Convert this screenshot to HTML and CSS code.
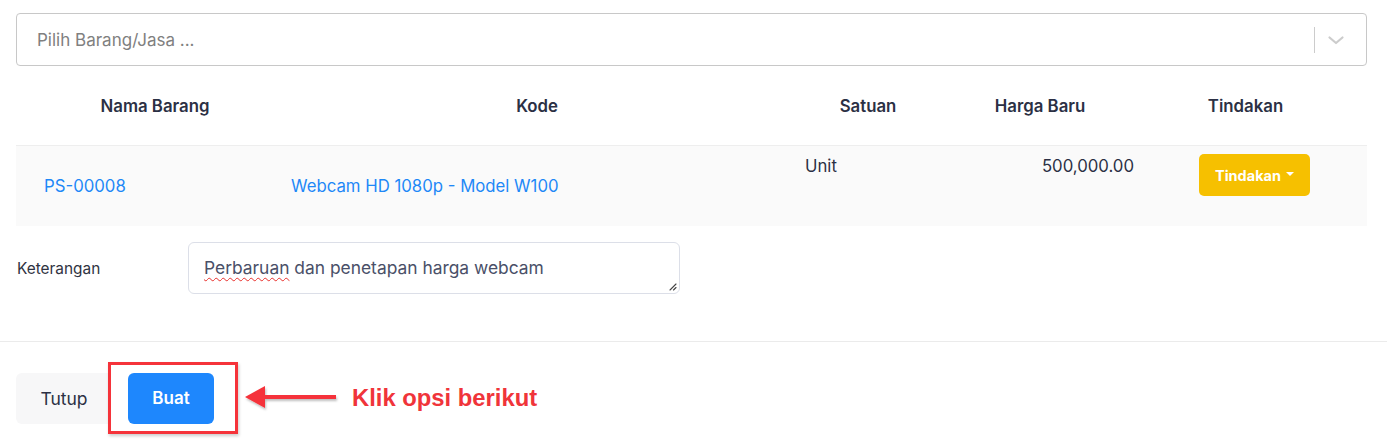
FILE: index.html
```html
<!DOCTYPE html>
<html lang="id">
<head>
<meta charset="utf-8">
<title>Harga Baru</title>
<link rel="stylesheet" href="styles.css">
</head>
<body>
<div class="content">
  <div class="select">
    <span class="placeholder">Pilih Barang/Jasa ...</span>
    <div class="select-ind">
      <span class="sep"></span>
      <svg class="chev" width="20" height="20" viewBox="0 0 20 20"><path d="M3.5 7.5 L10 13 L16.5 7.5" fill="none" stroke="#cccccc" stroke-width="2.2" stroke-linecap="round" stroke-linejoin="round"/></svg>
    </div>
  </div>

  <div class="thead">
    <div class="th">Nama Barang</div>
    <div class="th">Kode</div>
    <div class="th">Satuan</div>
    <div class="th">Harga Baru</div>
    <div class="th">Tindakan</div>
  </div>
  <div class="trow">
    <div class="td td-code"><a class="link">PS-00008</a></div>
    <div class="td td-name"><a class="link">Webcam HD 1080p - Model W100</a></div>
    <div class="td td-unit">Unit</div>
    <div class="td td-price">500,000.00</div>
    <div class="td td-act"><button class="btn-warn">Tindakan<span class="caret"></span></button></div>
  </div>

  <div class="form-row">
    <label class="label">Keterangan</label>
    <div class="textarea"><span class="misspell">Perbaruan</span> dan penetapan harga webcam
      <svg class="grip" width="10" height="10" viewBox="0 0 10 10"><path d="M9 3 L3 9 M9 6.5 L6.5 9" stroke="#444" stroke-width="1.1" stroke-linecap="round"/></svg>
    </div>
  </div>
</div>

<div class="footer">
  <button class="btn-light">Tutup</button>
  <div class="highlight">
    <button class="btn-primary">Buat</button>
  </div>
  <svg class="arrow" width="96" height="32" viewBox="0 0 96 32">
    <defs><filter id="sh" filterUnits="userSpaceOnUse" x="0" y="0" width="96" height="32"><feDropShadow dx="1" dy="2" stdDeviation="1" flood-color="#000" flood-opacity="0.25"/></filter></defs>
    <g filter="url(#sh)">
      <rect x="16" y="13" width="76" height="4" fill="#f5333a"/>
      <polygon points="1,15 21,4 21,26" fill="#f5333a"/>
    </g>
  </svg>
  <span class="note">Klik opsi berikut</span>
</div>
</body>
</html>
```

FILE: styles.css
```css
* { box-sizing: border-box; }
html, body { margin: 0; padding: 0; background: #ffffff; }
body {
  font-family: Inter, "Noto Sans", "Liberation Sans", sans-serif;
  color: #2b3044;
  width: 1387px;
  height: 445px;
  overflow: hidden;
}
.content { padding: 13px 20px 0 16px; }

.select {
  height: 53px;
  border: 1px solid #c8c8c8;
  border-radius: 4px;
  display: flex;
  align-items: center;
  justify-content: space-between;
  padding-left: 20px;
}
.placeholder { color: #808080; font-size: 17px; }
.select-ind { display: flex; align-items: center; height: 100%; }
.sep { width: 1px; height: 26px; background: #cccccc; }
.chev { margin: 0 20px 0 11px; }

.thead {
  display: grid;
  grid-template-columns: 278px 486px 176px 168px 243px;
  height: 79px;
  align-items: center;
}
.th {
  text-align: center;
  font-weight: 600;
  font-size: 16.8px;
  color: #2b3044;
}

.trow {
  display: grid;
  grid-template-columns: 247px 512px 202px 185px 205px;
  height: 81px;
  background: #fafafa;
  border-top: 1px solid #eeeeee;
  font-size: 16.75px;
}
.td { color: #2b3044; }
.link { color: #1e88f7; text-decoration: none; }
.td-code { padding: 30px 0 0 28px; }
.td-name { padding: 30px 0 0 28px; }
.td-unit { padding: 10px 0 0 30px; }
.td-price { padding: 10px 28px 0 0; text-align: right; }
.td-act { padding: 8px 0 0 37px; }
.btn-warn {
  background: #f6c000;
  border: none;
  border-radius: 5px;
  color: #ffffff;
  font-family: Inter, "Noto Sans", sans-serif;
  font-weight: 700;
  font-size: 14.5px;
  width: 111px;
  height: 42px;
  padding: 0;
  display: inline-flex;
  align-items: center;
  justify-content: center;
}
.caret {
  display: inline-block;
  margin-left: 5px;
  border-left: 4px solid transparent;
  border-right: 4px solid transparent;
  border-top: 4px solid #ffffff;
  margin-top: -2px;
}

.form-row {
  display: flex;
  align-items: center;
  margin-top: 16px;
}
.label {
  width: 172px;
  padding-left: 1px;
  font-size: 15.4px;
  color: #2f3342;
}
.textarea {
  position: relative;
  width: 492px;
  height: 52px;
  border: 1px solid #dcdfe8;
  border-radius: 6px;
  padding: 13px 15px;
  font-size: 17.4px;
  color: #4a5068;
  line-height: 24px;
}
.misspell { text-decoration: underline wavy #e8302c; text-decoration-thickness: 1px; text-underline-offset: 3px; }
.grip { position: absolute; right: 2px; bottom: 2px; }

.footer {
  margin-top: 47px;
  border-top: 1px solid #ebebeb;
  padding: 9px 0 0 16px;
  display: flex;
  align-items: center;
  height: 104px;
}
.btn-light {
  width: 92px;
  height: 51px;
  margin-top: 1px;
  background: #f7f7f8;
  border: none;
  border-radius: 6px 0 0 6px;
  font-family: Inter, "Noto Sans", sans-serif;
  font-size: 17.5px;
  color: #2b3044;
  padding: 0 0 0 4px;
}
.highlight {
  width: 130px;
  height: 72px;
  border: 3px solid #f5333a;
  box-shadow: 1px 2px 3px rgba(0,0,0,0.2);
  display: flex;
  align-items: center;
  padding-left: 17px;
}
.btn-primary {
  width: 86px;
  height: 51px;
  background: #1e87fd;
  border: none;
  border-radius: 6px;
  color: #ffffff;
  font-family: Inter, "Noto Sans", sans-serif;
  font-weight: 600;
  font-size: 17px;
  padding: 0;
}
.arrow { margin-left: 6px; }
.note {
  margin-left: 12px;
  color: #f0343a;
  font-family: "Liberation Sans", Arial, sans-serif;
  font-weight: 700;
  font-size: 23.8px;
}
```
